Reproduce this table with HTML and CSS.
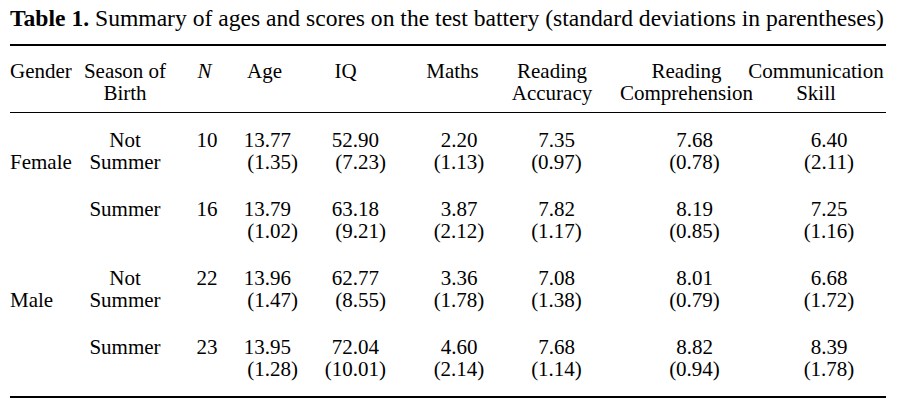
FILE: index.html
```html
<!DOCTYPE html>
<html lang="en">
<head>
<meta charset="utf-8">
<title>Table 1</title>
<link rel="stylesheet" href="styles.css">
</head>
<body>
<div class="page">
  <p class="caption"><b>Table 1.</b> Summary of ages and scores on the test battery (standard deviations in parentheses)</p>
  <div class="table">
    <div class="row head">
      <div class="g">Gender</div>
      <div class="s">Season of<br>Birth</div>
      <div class="n"><i>N</i></div>
      <div class="age">Age</div>
      <div class="iq">IQ</div>
      <div class="ma">Maths</div>
      <div class="ra">Reading<br>Accuracy</div>
      <div class="rc">Reading<br>Comprehension</div>
      <div class="cs">Communication<br>Skill</div>
    </div>

    <div class="row first">
      <div class="g">Female</div>
      <div class="s">Not<br>Summer</div>
      <div class="n">10</div>
      <div class="num dec"><span class="m">13.77</span><span>(1.35)</span></div>
      <div class="num dec"><span class="m">52.90</span><span>(7.23)</span></div>
      <div class="num"><span>2.20</span><span>(1.13)</span></div>
      <div class="num"><span>7.35</span><span>(0.97)</span></div>
      <div class="num"><span>7.68</span><span>(0.78)</span></div>
      <div class="num"><span>6.40</span><span>(2.11)</span></div>
    </div>

    <div class="row">
      <div class="g"></div>
      <div class="s">Summer</div>
      <div class="n">16</div>
      <div class="num dec"><span class="m">13.79</span><span>(1.02)</span></div>
      <div class="num dec"><span class="m">63.18</span><span>(9.21)</span></div>
      <div class="num"><span>3.87</span><span>(2.12)</span></div>
      <div class="num"><span>7.82</span><span>(1.17)</span></div>
      <div class="num"><span>8.19</span><span>(0.85)</span></div>
      <div class="num"><span>7.25</span><span>(1.16)</span></div>
    </div>

    <div class="row">
      <div class="g">Male</div>
      <div class="s">Not<br>Summer</div>
      <div class="n">22</div>
      <div class="num dec"><span class="m">13.96</span><span>(1.47)</span></div>
      <div class="num dec"><span class="m">62.77</span><span>(8.55)</span></div>
      <div class="num"><span>3.36</span><span>(1.78)</span></div>
      <div class="num"><span>7.08</span><span>(1.38)</span></div>
      <div class="num"><span>8.01</span><span>(0.79)</span></div>
      <div class="num"><span>6.68</span><span>(1.72)</span></div>
    </div>

    <div class="row last">
      <div class="g"></div>
      <div class="s">Summer</div>
      <div class="n">23</div>
      <div class="num dec"><span class="m">13.95</span><span>(1.28)</span></div>
      <div class="num dec"><span class="m">72.04</span><span>(10.01)</span></div>
      <div class="num"><span>4.60</span><span>(2.14)</span></div>
      <div class="num"><span>7.68</span><span>(1.14)</span></div>
      <div class="num"><span>8.82</span><span>(0.94)</span></div>
      <div class="num"><span>8.39</span><span>(1.78)</span></div>
    </div>
  </div>
</div>
</body>
</html>
```

FILE: styles.css
```css
html, body {
  margin: 0;
  padding: 0;
  background: #ffffff;
}

.page {
  padding: 4px 0 0 10px;
  font-family: "Liberation Serif", "Times New Roman", serif;
  color: #000000;
}

.caption {
  margin: 0 0 12px 0;
  font-size: 23.6px;
  line-height: 28px;
  white-space: nowrap;
}

.caption b {
  font-weight: bold;
}

.table {
  width: 876px;
  font-size: 21px;
  line-height: 22px;
}

.row {
  display: grid;
  grid-template-columns: 68px 94px 70px 58px 86px 146px 49px 227px 42px 1fr;
  padding: 13px 0 12px 0;
}

.row > div {
  justify-self: center;
  text-align: center;
  white-space: nowrap;
}

.row.head {
  border-top: 2px solid #000;
  border-bottom: 1px solid #000;
  padding: 14px 0 8px 0;
}

.row.first {
  padding-top: 16px;
}

.row.last {
  padding-bottom: 16px;
  border-bottom: 2px solid #000;
}

.row > .g {
  justify-self: start;
  text-align: left;
  align-self: end;
}

.row.head > .g {
  align-self: start;
}

.row > .n {
  align-self: start;
}

.row.head > .n {
  margin-right: 5px;
}

.row.head > .age {
  justify-self: start;
  margin-left: 5px;
}

.row.head > .iq {
  margin-left: 5px;
}

.row.head > .ma {
  margin-right: 13px;
}

.row.head > .ra {
  margin-right: 9px;
}

.row.head > .rc {
  margin-right: 16px;
}

.row.head > .cs {
  margin-right: 26px;
}

.num span {
  display: block;
}

.row > .num.dec {
  justify-self: end;
  text-align: right;
}

.row > .num.dec:nth-child(4) {
  margin-right: 2px;
}

.num.dec .m {
  padding-right: 0.333em;
}
```
